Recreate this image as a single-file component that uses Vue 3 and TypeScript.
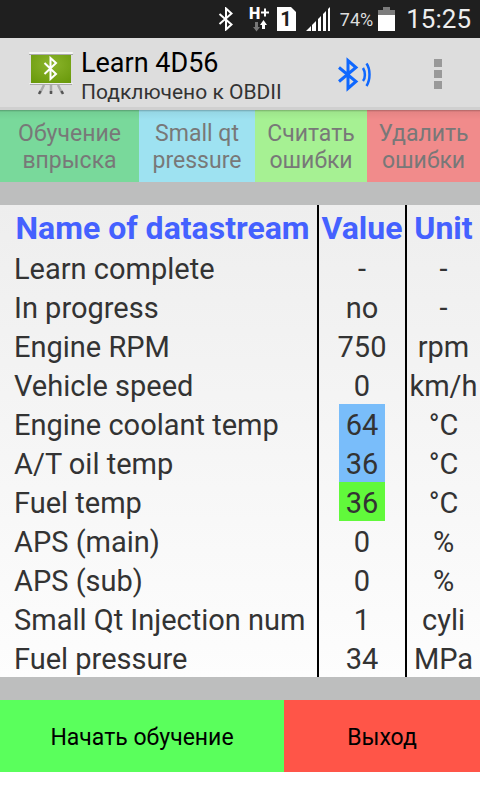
<script setup lang="ts">
interface Row {
  name: string
  value: string
  unit: string
  mark?: 'cold' | 'ok'
}

const rows: Row[] = [
  { name: 'Learn complete', value: '-', unit: '-' },
  { name: 'In progress', value: 'no', unit: '-' },
  { name: 'Engine RPM', value: '750', unit: 'rpm' },
  { name: 'Vehicle speed', value: '0', unit: 'km/h' },
  { name: 'Engine coolant temp', value: '64', unit: '°C', mark: 'cold' },
  { name: 'A/T oil temp', value: '36', unit: '°C', mark: 'cold' },
  { name: 'Fuel temp', value: '36', unit: '°C', mark: 'ok' },
  { name: 'APS (main)', value: '0', unit: '%' },
  { name: 'APS (sub)', value: '0', unit: '%' },
  { name: 'Small Qt Injection num', value: '1', unit: 'cyli' },
  { name: 'Fuel pressure', value: '34', unit: 'MPa' },
]
</script>

<template>
  <div class="screen">
    <div class="status">
      <svg class="st-bt" width="16" height="24" viewBox="0 0 16 24" aria-hidden="true">
        <path d="M1.500 7L13.500 17.500L8 22.500V1.500L13.500 6.500L1.500 17" fill="none" stroke="#fff" stroke-width="2" />
      </svg>
      <svg class="st-net" width="21" height="36" viewBox="0 -5 21 36" aria-hidden="true">
        <text x="0" y="13" class="net-text">H</text>
        <path d="M12 6.500H20M16 2.500V10.500" stroke="#fff" stroke-width="2" />
        <path d="M6 16h3v5h2l-3.500 4.500L4 21h2z" fill="#777" />
        <path d="M13 23h3v-4h2l-3.500-5L11 19h2z" fill="#fff" />
      </svg>
      <svg class="st-sim" width="19" height="24" viewBox="0 0 19 24" aria-hidden="true">
        <path d="M0 0H14L19 5V24H0Z" fill="#fff" />
        <text x="9" y="19" text-anchor="middle" class="sim-text">1</text>
      </svg>
      <svg class="st-signal" width="25" height="24" viewBox="0 0 25 24" aria-hidden="true">
        <path d="M0 24L5 19V24ZM6 24V18L10 14V24ZM12 24V12L15 9V24ZM17 24V7L20 4V24ZM22 24V2L24 0V24Z" fill="#fff" />
      </svg>
      <span class="percent">74%</span>
      <svg class="st-battery" width="17" height="24" viewBox="0 0 17 24" aria-hidden="true">
        <path d="M5 0H12V3H17V8H0V3H5Z" fill="#7c7c7c" />
        <path d="M0 8H17V24H0Z" fill="#fff" />
      </svg>
      <span class="clock">15:25</span>
    </div>

    <header class="bar">
      <svg class="logo" width="46" height="46" viewBox="0 0 46 46" aria-hidden="true">
        <defs>
          <radialGradient id="board" cx="50%" cy="35%" r="75%">
            <stop offset="0" stop-color="#8cb52c" />
            <stop offset="1" stop-color="#6a9a0c" />
          </radialGradient>
        </defs>
        <path d="M16 34L12 42M23 34V42M30 34L34 42" stroke="#aaa" stroke-width="2.500" />
        <path d="M12.500 40L11 43M23 40V43M33.500 40L35 43" stroke="#555" stroke-width="2.500" />
        <rect x="3" y="3" width="40" height="29" fill="url(#board)" />
        <rect x="1" y="1" width="44" height="2" rx="1" fill="#f5f5f5" />
        <path d="M1 3.500H45" stroke="#aaa" stroke-width="1" />
        <rect x="1" y="32" width="44" height="1" fill="#eee" />
        <path d="M2 33.500H44" stroke="#aaa" stroke-width="1" />
        <path d="M16.500 12L28 23L22.500 28V7L28 12L16.500 23" fill="none" stroke="#fff" stroke-width="2" />
      </svg>
      <div class="titles">
        <h1>Learn 4D56</h1>
        <p>Подключено к OBDII</p>
      </div>
      <button class="icon-button link" type="button" aria-label="Bluetooth">
        <svg width="34" height="36" viewBox="0 0 34 36" aria-hidden="true">
          <g fill="none" stroke="#0f68ff" stroke-width="3">
            <path d="M1 11.500L18 25.500L10 32.500V4.500L18 11.500L1 25.500" />
            <path d="M25 12C27.500 16 27.500 22 25 25" stroke-width="2.500" />
            <path d="M28.500 7.500C32.500 13 32.500 24 28.500 30" stroke-width="2.500" />
          </g>
        </svg>
      </button>
      <button class="icon-button more" type="button" aria-label="Menu">
        <svg width="8" height="30" viewBox="0 0 8 30" aria-hidden="true">
          <path d="M0 0H8V8H0ZM0 11H8V19H0ZM0 22H8V30H0Z" fill="#999" />
        </svg>
      </button>
    </header>

    <nav class="modes">
      <button type="button" class="learn" disabled>Обучение<br />впрыска</button>
      <button type="button" class="small" disabled>Small qt<br />pressure</button>
      <button type="button" class="read" disabled>Считать<br />ошибки</button>
      <button type="button" class="erase" disabled>Удалить<br />ошибки</button>
    </nav>

    <main>
      <table>
        <thead>
          <tr>
            <th class="name" scope="col">Name of datastream</th>
            <th class="value" scope="col">Value</th>
            <th class="unit" scope="col">Unit</th>
          </tr>
        </thead>
        <tbody>
          <tr v-for="row in rows" :key="row.name">
            <td class="name">{{ row.name }}</td>
            <td class="value"><span class="reading" :class="row.mark">{{ row.value }}</span></td>
            <td class="unit">{{ row.unit }}</td>
          </tr>
        </tbody>
      </table>
    </main>

    <footer class="actions">
      <button type="button" class="start">Начать обучение</button>
      <button type="button" class="exit">Выход</button>
    </footer>
  </div>
</template>

<style>
body {
  margin: 0;
  background: #fff;
}
</style>

<style scoped>
.screen {
  font-family: Roboto, "Noto Sans", sans-serif;
  color: #333;
}

button {
  margin: 0;
  padding: 0;
  border: 0;
  font: inherit;
}

svg {
  display: block;
  flex: none;
}

.status {
  display: flex;
  justify-content: flex-end;
  align-items: center;
  height: 38px;
  padding-right: 9px;
  background: #1f1f1f;
  color: #fff;
}

.st-net {
  margin-left: 15px;
}

.net-text {
  font-size: 16px;
  font-weight: 900;
  fill: #fff;
}

.st-sim {
  margin-left: 7px;
}

.sim-text {
  font-size: 20px;
  font-weight: 700;
  fill: #1f1f1f;
}

.st-signal {
  margin-left: 10px;
}

.percent {
  margin-left: 9px;
  font-size: 18px;
  color: #ddd;
}

.st-battery {
  margin-left: 5px;
}

.clock {
  margin-left: 11px;
  font-size: 26px;
  color: #eee;
}

.bar {
  display: flex;
  align-items: center;
  box-sizing: border-box;
  height: 72px;
  padding: 2px 38px 0 28px;
  background: #ddd;
  border-bottom: 3px solid #d0d0d0;
}

.titles {
  flex: 1;
  padding: 4px 0 0 7px;
  white-space: nowrap;
}

h1 {
  margin: 0;
  font-size: 27px;
  font-weight: 400;
  line-height: 32px;
  color: #000;
}

p {
  margin: 0;
  font-size: 21px;
  line-height: 26px;
}

.icon-button {
  background: none;
}

.more {
  margin-left: 62px;
}

.modes,
.actions {
  display: flex;
}

.modes button,
.actions button {
  height: 72px;
}

.modes button {
  padding-top: 2px;
  background-image: linear-gradient(rgba(0, 0, 0, 0.28), rgba(0, 0, 0, 0.05) 2px, transparent 10px);
  font-size: 23px;
  line-height: 27px;
  color: #787878;
}

.modes .learn {
  flex: 139;
  background-color: #79d99b;
}

.modes .small {
  flex: 116;
  background-color: #9ee2f1;
}

.modes .read {
  flex: 112;
  background-color: #a6f193;
}

.modes .erase {
  flex: 113;
  background-color: #f18b8b;
}

main {
  padding: 23px 0;
  background: #bdbebe;
}

table {
  width: 100%;
  border-collapse: separate;
  border-spacing: 0;
  background: linear-gradient(#eee, #fdfdfd);
  font-size: 29px;
  line-height: 35px;
}

th,
td {
  padding: 4px 0 0;
  text-align: center;
  white-space: nowrap;
}

th {
  font-size: 32px;
  line-height: 39px;
  font-weight: 700;
  color: #4461ff;
}

td.name {
  padding-left: 14px;
  text-align: left;
}

th.name {
  padding-left: 8px;
}

.value {
  width: 86px;
  border: solid #000;
  border-width: 0 2px;
}

td.value {
  padding: 0;
}

.unit {
  width: 73px;
}

.reading {
  display: inline-block;
  vertical-align: top;
  padding: 4px 7px 0;
}

.cold {
  background: #79bdfa;
}

.ok {
  background: #61f93b;
}

.actions button {
  padding-top: 2px;
  font-size: 23px;
  color: #000;
}

.start {
  flex: 284;
  background: #5aff5c;
}

.exit {
  flex: 196;
  background: #ff5548;
}
</style>
